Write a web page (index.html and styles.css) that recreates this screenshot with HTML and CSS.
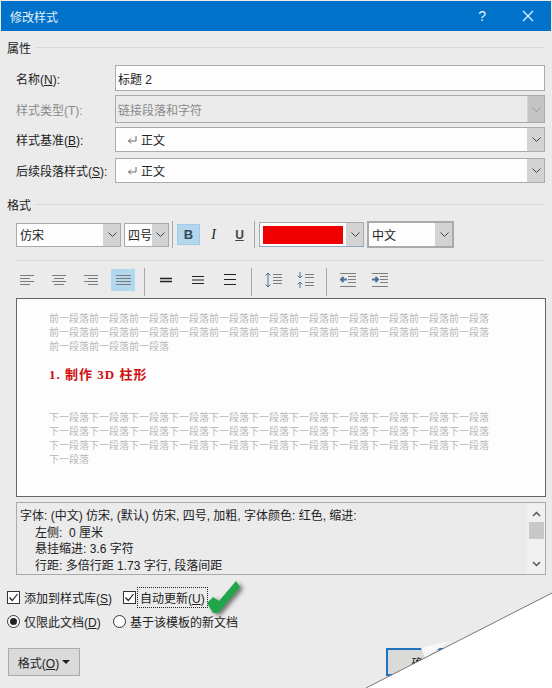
FILE: index.html
```html
<!DOCTYPE html>
<html lang="zh-CN">
<head>
  <meta charset="UTF-8" />
  <title>修改样式</title>
  <link rel="stylesheet" href="styles.css">
</head>
<body>

<svg class="defs" width="0" height="0">
  <symbol id="chev" viewBox="0 0 9 5"><path d="M0.5 0.5 4.5 4.5 8.5 0.5" fill="none" stroke="currentColor"/></symbol>
  <symbol id="check" viewBox="0 0 13 13"><rect x="0.5" y="0.5" width="12" height="12" fill="#fff" stroke="#333"/><path d="M2.5 6.5 5.3 9.5 10.5 3" fill="none" stroke="#222" stroke-width="1.2"/></symbol>
  <symbol id="ret" viewBox="0 0 10 10"><path d="M9 1V6H1.5M4 3.5 1.5 6 4 8.5" fill="none" stroke="#666"/></symbol>
</svg>

<div class="dialog">
  <div class="titlebar">
    <span class="title">修改样式</span>
    <span class="help">?</span>
    <svg class="close" width="12" height="12" viewBox="0 0 12 12"><path d="M1 1 11 11M11 1 1 11" stroke="#eaf4fb" stroke-width="1.2"/></svg>
  </div>

  <div class="group-head group-first"><span>属性</span><i></i></div>

  <div class="fields">
    <label class="name-row"><span>名称(<u>N</u>):</span></label>
    <div class="field name-row">标题 2</div>

    <label class="type-row off"><span>样式类型(T):</span></label>
    <div class="field type-row off-field">
      <span class="value">链接段落和字符</span>
      <span class="arrow off-arrow"><svg width="9" height="5"><use href="#chev"/></svg></span>
    </div>

    <label class="base-row"><span>样式基准(<u>B</u>):</span></label>
    <div class="field base-row">
      <span class="value para"><svg width="10" height="10"><use href="#ret"/></svg>正文</span>
      <span class="arrow"><svg width="9" height="5"><use href="#chev"/></svg></span>
    </div>

    <label class="base-row next-row"><span>后续段落样式(<u>S</u>):</span></label>
    <div class="field base-row next-row">
      <span class="value para"><svg width="10" height="10"><use href="#ret"/></svg>正文</span>
      <span class="arrow"><svg width="9" height="5"><use href="#chev"/></svg></span>
    </div>
  </div>

  <div class="group-head group-second"><span>格式</span><i></i></div>

  <div class="toolbar-font">
    <div class="select font-select"><span class="value">仿宋</span><span class="arrow"><svg width="9" height="5"><use href="#chev"/></svg></span></div>
    <div class="select size-select"><span class="value">四号</span><span class="arrow"><svg width="9" height="5"><use href="#chev"/></svg></span></div>
    <span class="sep sep-font"></span>
    <span class="fmt fmt-b active">B</span>
    <span class="fmt fmt-i">I</span>
    <span class="fmt fmt-u">U</span>
    <span class="sep sep-color"></span>
    <div class="select color-select"><span class="swatch-wrap"><span class="swatch"></span></span><span class="arrow"><svg width="9" height="5"><use href="#chev"/></svg></span></div>
    <div class="select lang-select"><span class="value">中文</span><span class="arrow"><svg width="9" height="5"><use href="#chev"/></svg></span></div>
  </div>

  <div class="rule"></div>

  <div class="toolbar-para">
    <span class="tool"><svg width="14" height="10" viewBox="0 0 14 10"><path class="ln" d="M0 .5H14M0 3.5H10M0 6.5H14M0 9.5H10"/></svg></span>
    <span class="tool"><svg width="14" height="10" viewBox="0 0 14 10"><path class="ln" d="M0 .5H14M2 3.5H12M0 6.5H14M2 9.5H12"/></svg></span>
    <span class="tool"><svg width="14" height="10" viewBox="0 0 14 10"><path class="ln" d="M0 .5H14M4 3.5H14M0 6.5H14M4 9.5H14"/></svg></span>
    <span class="tool active"><svg width="15" height="10" viewBox="0 0 15 10"><path class="ln" d="M0 .5H15M0 3.5H15M0 6.5H15M0 9.5H15"/></svg></span>
    <span class="sep"></span>
    <span class="tool"><svg width="12" height="10" viewBox="0 0 12 10"><path class="dk bold" d="M0 3.5H12M0 6.5H12"/></svg></span>
    <span class="tool"><svg width="12" height="10" viewBox="0 0 12 10"><path class="dk" d="M0 1.5H12M0 5H12M0 8.5H12"/></svg></span>
    <span class="tool"><svg width="12" height="12" viewBox="0 0 12 12"><path class="dk" d="M0 .5H12M0 5.5H12M0 10.5H12"/></svg></span>
    <span class="sep"></span>
    <span class="tool"><svg width="17" height="16" viewBox="0 0 17 16"><path class="ar" d="M3 1V15M.7 3.5 3 1 5.300 3.500M.7 12.500 3 15 5.300 12.500"/><path class="ln" d="M8 2.500H17M8 5.500H17M8 8.500H17M8 11.500H17"/></svg></span>
    <span class="tool"><svg width="17" height="16" viewBox="0 0 17 16"><path class="ar" d="M3 0V6M.7 3.700 3 6 5.300 3.700M3 10V16M.7 12.300 3 10 5.300 12.300"/><path class="ln" d="M8 2.500H17M8 5.500H17M8 10.500H17M8 13.500H17"/></svg></span>
    <span class="sep"></span>
    <span class="tool"><svg width="16" height="14" viewBox="0 0 16 14"><path class="ln" d="M0 .5H16M8 3.500H16M8 6.500H16M8 9.500H16M0 13.500H16"/><path class="ar thick" d="M7 6.500H1M3.500 4 1 6.500 3.500 9"/></svg></span>
    <span class="tool"><svg width="16" height="14" viewBox="0 0 16 14"><path class="ln" d="M0 .5H16M8 3.500H16M8 6.500H16M8 9.500H16M0 13.500H16"/><path class="ar thick" d="M0 6.500H6M3.500 4 6 6.500 3.500 9"/></svg></span>
  </div>

  <div class="preview">
    <p class="ghost">前一段落前一段落前一段落前一段落前一段落前一段落前一段落前一段落前一段落前一段落前一段落前一段落前一段落前一段落前一段落前一段落前一段落前一段落前一段落前一段落前一段落前一段落前一段落前一段落前一段落</p>
    <h2 class="sample">1. 制作 3D 柱形</h2>
    <p class="ghost">下一段落下一段落下一段落下一段落下一段落下一段落下一段落下一段落下一段落下一段落下一段落下一段落下一段落下一段落下一段落下一段落下一段落下一段落下一段落下一段落下一段落下一段落下一段落下一段落下一段落下一段落下一段落下一段落下一段落下一段落下一段落下一段落下一段落下一段落</p>
  </div>

  <div class="desc">
    <div class="desc-text">
      <div>字体: (中文) 仿宋, (默认) 仿宋, 四号, 加粗, 字体颜色: 红色, 缩进:</div>
      <div class="indent">左侧:&nbsp; 0 厘米</div>
      <div class="indent">悬挂缩进: 3.6 字符</div>
      <div class="indent">行距: 多倍行距 1.73 字行, 段落间距</div>
    </div>
    <div class="scrollbar">
      <svg width="9" height="6" viewBox="0 0 9 6"><path d="M1 5 4.500 1.500 8 5" fill="none" stroke="#555" stroke-width="1.500"/></svg>
      <span class="thumb"></span>
      <span class="scroll-fill"></span>
      <svg width="9" height="6" viewBox="0 0 9 6"><path d="M1 1 4.500 4.500 8 1" fill="none" stroke="#555" stroke-width="1.500"/></svg>
    </div>
  </div>

  <div class="opts opts-check">
    <span class="opt opt-lib"><svg width="13" height="13"><use href="#check"/></svg><span>添加到样式库(<u>S</u>)</span></span>
    <span class="opt"><svg width="13" height="13"><use href="#check"/></svg><span class="focus">自动更新(<u>U</u>)</span></span>
  </div>
  <div class="opts opts-radio">
    <span class="opt opt-doc"><span class="radio on"></span><span>仅限此文档(<u>D</u>)</span></span>
    <span class="opt"><span class="radio"></span><span>基于该模板的新文档</span></span>
  </div>

  <div class="buttons">
    <span class="btn btn-format"><span>格式(<u>O</u>)</span><span class="caret"></span></span>
    <span class="btn btn-ok">确定</span>
  </div>

  <!-- green tick pasted over the screenshot -->
  <svg class="tick" width="40" height="36" viewBox="0 0 40 36"><path d="M0 23 6 17 12 21 29 1 33 7 11 33 6 33Z" fill="#1fa64a"/></svg>

  <!-- torn page corner -->
  <svg class="tear" width="552" height="688" viewBox="0 0 552 688">
    <path d="M421 648 450 641 425 658Z" fill="#f8f8f8"/>
    <path d="M552 593 366 688H552Z" fill="#fff"/>
    <path d="M552 593 366 688" stroke="#777" fill="none"/>
  </svg>
</div>

</body>
</html>
```

FILE: styles.css
```css
* {
  box-sizing: border-box;
}
body {
  margin: 0;
  font-family: "Liberation Sans", "Noto Sans CJK SC", sans-serif;
  font-size: 12px;
  color: #222;
}
.defs {
  display: block;
  height: 0;
}
.dialog {
  position: relative;
  width: 552px;
  height: 688px;
  padding-top: 1px;
  overflow: hidden;
  background: #ebebeb;
}
.titlebar {
  display: flex;
  align-items: center;
  height: 30px;
  margin: 0 1px;
  padding-left: 9px;
  background: #0072c9;
  color: #e6f1f9;
}
.title {
  flex: 1;
}
.help {
  margin-right: 36px;
  font-size: 14px;
}
.close {
  margin-right: 17px;
}

.group-head {
  display: flex;
  align-items: center;
  height: 16px;
  padding: 0 7px;
}
.group-head i {
  flex: 1;
  height: 1px;
  margin-left: 5px;
  background: #d8d8d8;
}
.group-first {
  margin-top: 8px;
  margin-bottom: 1px;
}
.group-second {
  margin-top: 13px;
}

.fields {
  display: grid;
  grid-template-columns: 99px 430px;
  grid-template-rows: 26px 28px 25px 27px;
  row-gap: 4px;
  margin-top: 10px;
  padding-left: 16px;
}
.fields label {
  display: flex;
  align-items: center;
}
.next-row {
  margin-top: 2px;
}
.off {
  color: #8a8a8a;
}
.field {
  display: flex;
  align-items: center;
  padding-left: 2px;
  background: #fdfdfd;
  border: 1px solid #aaa;
}
.off-field {
  background: #ebebeb;
  color: #8a8a8a;
}
.value {
  flex: 1;
}
.para {
  display: flex;
  align-items: center;
  gap: 4px;
  padding-left: 9px;
}
.arrow {
  display: flex;
  align-items: center;
  justify-content: center;
  align-self: stretch;
  width: 17px;
  background: #d3d3d3;
  border-left: 1px solid #d3d3d3;
  color: #444;
}
.off-arrow {
  background: #c4c4c4;
  color: #999;
}

.toolbar-font {
  display: flex;
  align-items: center;
  height: 27px;
  margin-top: 9px;
  padding-left: 16px;
}
.select {
  display: flex;
  align-items: stretch;
  height: 24px;
  background: #fdfdfd;
  border: 1px solid #aaa;
}
.select .value {
  display: flex;
  align-items: center;
  padding-left: 3px;
  overflow: hidden;
  white-space: nowrap;
}
.font-select {
  width: 105px;
}
.size-select {
  width: 45px;
  margin-left: 3px;
}
.size-select .value {
  width: 27px;
  flex: none;
}
.sep {
  width: 1px;
  align-self: stretch;
  background: #a8a8a8;
}
.sep-font {
  margin: 0 4px 0 3px;
}
.fmt {
  display: flex;
  align-items: center;
  justify-content: center;
  width: 23px;
  height: 21px;
  border: 1px solid transparent;
  font-size: 13px;
}
.fmt-b {
  font-weight: bold;
  color: #37495c;
}
.fmt-i {
  margin-left: 2px;
  font-family: "Liberation Serif", serif;
  font-style: italic;
  font-size: 14px;
}
.fmt-u {
  margin-left: 3px;
  font-weight: bold;
  text-decoration: underline;
  font-size: 12px;
  color: #444;
}
.active {
  background: #b3d7ee;
  border-color: #a3cbe6;
}
.sep-color {
  margin: 0 4px 0 3px;
}
.color-select {
  width: 105px;
  height: 25px;
  border-bottom-color: #8fa6c0;
}
.swatch-wrap {
  flex: 1;
  padding: 3px;
}
.swatch {
  display: block;
  width: 80px;
  height: 18px;
  background: #f00000;
}
.lang-select {
  width: 87px;
  height: 27px;
  margin-left: 3px;
  border-width: 2px;
}
.lang-select .value {
  padding-left: 3px;
}

.rule {
  height: 1px;
  margin: 12px 7px 0 16px;
  background: #d8d8d8;
}

.toolbar-para {
  display: flex;
  gap: 8px;
  height: 22px;
  margin-top: 8px;
  padding-left: 15px;
}
.toolbar-para .sep {
  margin: -1px 1px 0;
  height: 28px;
  align-self: flex-start;
}
.tool {
  display: flex;
  align-items: center;
  justify-content: center;
  width: 24px;
  border: 1px solid transparent;
}
.ln,
.dk,
.ar {
  fill: none;
  stroke-width: 1;
}
.ln {
  stroke: #7d7d7d;
}
.dk {
  stroke: #222;
}
.bold {
  stroke-width: 1.500;
}
.ar {
  stroke: #4d7298;
}
.thick {
  stroke-width: 2;
}

.preview {
  height: 199px;
  width: 530px;
  margin: 7px 0 0 16px;
  padding: 13px 0 0 32px;
  background: #fdfdfd;
  border: 1px solid #666;
}
.ghost {
  width: 440px;
  margin: 0;
  font-size: 10px;
  line-height: 14px;
  color: #b8b8b8;
}
.sample {
  margin: 11px 0 26px;
  font-family: "Liberation Serif", "Noto Sans CJK SC", serif;
  font-size: 13px;
  font-weight: bold;
  line-height: 20px;
  letter-spacing: 1px;
  color: #d01010;
}

.desc {
  display: flex;
  width: 530px;
  height: 73px;
  margin: 5px 0 0 16px;
  background: #ebebeb;
  border: 1px solid #aaa;
}
.desc-text {
  flex: 1;
  padding: 5px 0 0 3px;
  line-height: 16.500px;
  white-space: nowrap;
  overflow: hidden;
}
.indent {
  padding-left: 15px;
}
.scrollbar {
  display: flex;
  flex-direction: column;
  align-items: center;
  width: 18px;
  padding: 8px 0 7px;
  background: #f0f0f0;
}
.thumb {
  width: 15px;
  height: 17px;
  margin-top: 5px;
  background: #c8c8c8;
}
.scroll-fill {
  flex: 1;
}

.opts {
  display: flex;
  align-items: center;
  height: 18px;
  padding-left: 7px;
}
.opts-check {
  margin-top: 13px;
}
.opts-radio {
  margin-top: 6px;
}
.opt {
  display: flex;
  align-items: center;
  gap: 4px;
}
.opt-lib {
  width: 116px;
}
.opt-doc {
  width: 106px;
}
.focus {
  margin-left: -2px;
  padding: 1px 2px;
  outline: 1px dotted #222;
}
.radio {
  position: relative;
  display: block;
  width: 13px;
  height: 13px;
  background: #fff;
  border: 1px solid #333;
  border-radius: 50%;
}
.radio.on::after {
  content: "";
  position: absolute;
  top: 2px;
  left: 2px;
  width: 7px;
  height: 7px;
  background: #222;
  border-radius: 50%;
}

.buttons {
  display: flex;
  margin-top: 18px;
  padding-left: 8px;
}
.btn {
  display: flex;
  align-items: center;
  justify-content: center;
  height: 28px;
  background: #dadada;
  border: 1px solid #aaa;
}
.btn-format {
  width: 72px;
  gap: 3px;
}
.caret {
  width: 0;
  height: 0;
  border: 4px solid transparent;
  border-top-color: #222;
  border-bottom: 0;
}
.btn-ok {
  width: 75px;
  margin-left: 306px;
  border: 2px solid #1f74bd;
}

.tick {
  position: absolute;
  left: 207px;
  top: 580px;
  filter: drop-shadow(3px 2px 2px rgba(60, 60, 60, 0.7));
}
.tear {
  position: absolute;
  left: 0;
  top: 0;
}
```
